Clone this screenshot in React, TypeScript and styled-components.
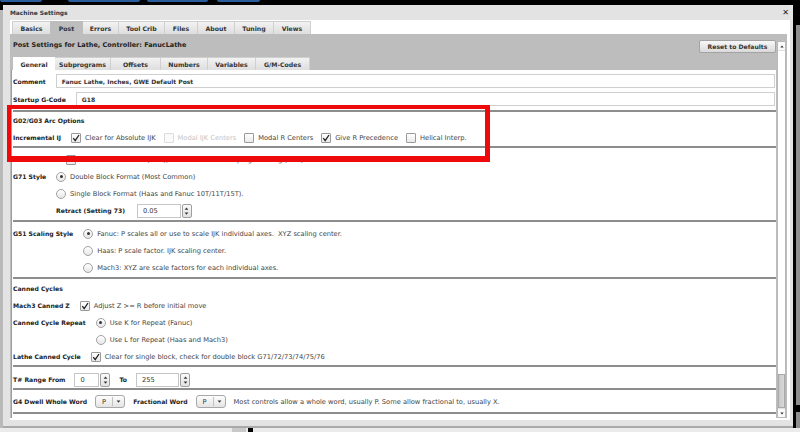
import React from 'react';
import styled, { createGlobalStyle, css } from 'styled-components';

const Global = createGlobalStyle`
  html, body { margin: 0; padding: 0; background: #e9e9e9; }
  body { font-family: "DejaVu Sans", Verdana, sans-serif; }
  * { box-sizing: border-box; }
`;

const Screen = styled.div`
  position: relative;
  width: 800px;
  height: 432px;
  overflow: hidden;
  display: flex;
  flex-direction: column;
  background: #e9e9e9;
  font-family: "DejaVu Sans", Verdana, sans-serif;
  font-size: 6.7px;
  color: #333;
`;

const TopStrip = styled.div`
  height: 5px;
  flex: none;
  background: #000;
  display: flex;
  align-items: flex-start;
`;

const BluePill = styled.div<{ $w: number; $ml: number }>`
  width: ${p => p.$w}px;
  margin-left: ${p => p.$ml}px;
  height: 2px;
  background: #2a5d9c;
  border-radius: 0 0 3px 3px;
`;

const Middle = styled.div`
  height: 423px;
  flex: none;
  display: flex;
`;

const LeftEdge = styled.div`
  width: 3px;
  background: linear-gradient(#000 0 5px, #b9b9b9 5px);
`;

const RightEdge = styled.div`
  width: 7px;
  display: flex;
`;

const RightDark = styled.div`
  width: 3px;
  background: #000;
`;

const RightGray = styled.div`
  flex: 1;
  background: linear-gradient(#000 0 20px, #8e8e8e 20px, #8e8e8e 400px, #000 400px, #000 407px, #8e8e8e 407px);
`;

const Dialog = styled.div`
  width: 790px;
  display: flex;
  flex-direction: column;
  background: #e3e3e3;
  border-radius: 5px 5px 0 0;
  padding: 0 3px 6px 7px;
  border-bottom: 2px solid #a9a9a9;
`;

const TitleBar = styled.div`
  height: 15px;
  flex: none;
  display: flex;
  align-items: center;
  justify-content: space-between;
  padding-right: 1px;
`;

const Title = styled.span`
  font-weight: bold;
  color: #1d3a4a;
  font-size: 5.9px;
`;

const Close = styled.span`
  font-weight: bold;
  font-size: 8px;
  color: #222;
`;

const Body = styled.div`
  flex: 1;
  display: flex;
  flex-direction: column;
  background: #fff;
  padding: 0 3px 2px 0;
`;

const TabRow = styled.div`
  height: 14px;
  flex: none;
  display: flex;
  align-items: flex-end;
  padding-left: 2px;
`;

const Tab = styled.div<{ $w: number; $active?: boolean; $activeBg: string }>`
  width: ${p => p.$w}px;
  height: 13px;
  display: flex;
  align-items: center;
  justify-content: center;
  font-weight: bold;
  font-size: 6.2px;
  color: #333;
  border: 1px solid #cfcfcf;
  border-bottom: none;
  margin-right: -1px;
  background: linear-gradient(#f2f2f2, #dedede);
  ${p => p.$active && css`
    background: ${p.$activeBg};
    border-color: ${p.$activeBg};
    position: relative;
    z-index: 1;
  `}
`;

const Panel = styled.div`
  flex: 1;
  display: flex;
  background: #bdbdbd;
`;

const Main = styled.div`
  flex: 1;
  display: flex;
  flex-direction: column;
  padding-left: 1px;
`;

const Header = styled.div`
  height: 22px;
  flex: none;
  display: flex;
  align-items: center;
  justify-content: space-between;
  padding-left: 2px;
  font-weight: bold;
  font-size: 6.5px;
  color: #222;
`;

const ResetButton = styled.div`
  width: 77px;
  height: 13px;
  margin-top: 3px;
  display: flex;
  align-items: center;
  justify-content: center;
  border: 1px solid #a3a3a3;
  border-radius: 2px;
  background: linear-gradient(#f7f7f7, #dadada);
  font-weight: bold;
  font-size: 6.1px;
  color: #333;
`;

const Scrollbar = styled.div`
  width: 9px;
  margin: 7px 1px 0 1px;
  display: flex;
  flex-direction: column;
  background: #fff;
  border: 1px solid #b8b8b8;
`;

const ScrollArrow = styled.div`
  height: 8px;
  display: flex;
  align-items: center;
  justify-content: center;
  background: #fafafa;
`;

const ScrollTrack = styled.div`
  flex: 1;
  display: flex;
  flex-direction: column;
  justify-content: flex-end;
  border-top: 1px solid #e0e0e0;
  border-bottom: 1px solid #e0e0e0;
`;

const ScrollThumb = styled.div`
  height: 34px;
  background: linear-gradient(to right, #c9c9c9, #d9d9d9);
  border: 1px solid #a9a9a9;
`;

const Form = styled.div`
  flex: 1;
  display: flex;
  flex-direction: column;
  background: #fff;
  border-left: 1px solid #9c9c9c;
  padding-left: 1px;
`;

const Section = styled.div<{ $pt?: number; $pb?: number; $gap?: number }>`
  display: flex;
  flex-direction: column;
  gap: ${p => p.$gap || 0}px;
  padding-top: ${p => p.$pt || 0}px;
  padding-bottom: ${p => p.$pb || 0}px;
  border-bottom: 2px solid #8d8d8d;
`;

const Line = styled.div<{ $gap?: number; $h?: number }>`
  height: ${p => p.$h || 17}px;
  display: flex;
  align-items: center;
  gap: ${p => (p.$gap === undefined ? 10 : p.$gap)}px;
  white-space: nowrap;
`;

const Group = styled.div`
  display: flex;
  align-items: flex-start;
  gap: 10px;
`;

const Stack = styled.div`
  display: flex;
  flex-direction: column;
`;

const Label = styled.span`
  height: 17px;
  display: flex;
  align-items: center;
  font-weight: bold;
  font-size: 6.1px;
  color: #222;
  white-space: nowrap;
`;

const Text = styled.span<{ $disabled?: boolean }>`
  color: ${p => (p.$disabled ? '#c4c4c4' : '#444')};
  white-space: nowrap;
`;

const TextInput = styled.div`
  flex: 1;
  height: 14px;
  margin-right: 1px;
  display: flex;
  align-items: center;
  padding-left: 5px;
  border: 1px solid #cfcfcf;
  font-weight: bold;
  font-size: 6px;
  color: #333;
`;

const Options = styled.div`
  display: flex;
  align-items: center;
  gap: 8px;
`;

const Option = styled.label`
  display: flex;
  align-items: center;
  gap: 4px;
`;

const BoxMark = styled.span<{ $disabled?: boolean }>`
  width: 10px;
  height: 10px;
  display: flex;
  align-items: center;
  justify-content: center;
  border: 1px solid ${p => (p.$disabled ? '#dcdcdc' : '#9a9a9a')};
  background: ${p => (p.$disabled ? '#fafafa' : 'linear-gradient(#ffffff, #e9e9e9)')};
  border-radius: 1px;
`;

const RadioMark = styled.span`
  width: 10px;
  height: 10px;
  display: flex;
  align-items: center;
  justify-content: center;
  border: 1px solid #a2a2a2;
  border-radius: 50%;
  background: linear-gradient(#ffffff, #e6e6e6);
`;

const RadioDot = styled.span`
  width: 3px;
  height: 3px;
  border-radius: 50%;
  background: #333;
`;

const SpinWrap = styled.div`
  display: flex;
  align-items: center;
  gap: 1px;
`;

const SpinField = styled.div<{ $w: number }>`
  width: ${p => p.$w}px;
  height: 14px;
  display: flex;
  align-items: center;
  padding-left: 5px;
  border: 1px solid #c6c6c6;
  color: #333;
`;

const SpinButton = styled.div`
  width: 10px;
  height: 14px;
  display: flex;
  flex-direction: column;
  align-items: center;
  justify-content: space-evenly;
  border: 1px solid #9f9f9f;
  border-radius: 2px;
  background: linear-gradient(#fafafa, #e2e2e2);
`;

const Select = styled.div`
  width: 30px;
  height: 13px;
  display: flex;
  align-items: center;
  border: 1px solid #a8a8a8;
  border-radius: 3px;
  background: linear-gradient(#fdfdfd, #e4e4e4);
  color: #333;
`;

const SelectValue = styled.span`
  width: 16px;
  text-align: center;
`;

const SelectArrow = styled.span`
  flex: 1;
  height: 9px;
  display: flex;
  align-items: center;
  justify-content: center;
  border-left: 1px solid #c2c2c2;
`;

const Annotation = styled.div`
  position: absolute;
  left: 7px;
  top: 105px;
  width: 483px;
  height: 57px;
  border: 4px solid #ee0a0a;
  border-bottom-width: 6px;
  border-right-width: 5px;
  pointer-events: none;
`;

const BottomStrip = styled.div`
  flex: 1;
  display: flex;
  align-items: stretch;
  background: #ebebeb;
`;

const BottomBlock = styled.div<{ $w: number; $ml: number; $c: string }>`
  width: ${p => p.$w}px;
  margin-left: ${p => p.$ml}px;
  background: ${p => p.$c};
`;

const Tri = ({ down, size = 5 }: { down?: boolean; size?: number }) => (
  <svg width={size} height={Math.ceil(size * 0.6)} viewBox="0 0 6 4">
    {down ? <path d="M0.5 0.5 H5.5 L3 3.5 Z" fill="#333" /> : <path d="M0.5 3.5 H5.5 L3 0.5 Z" fill="#333" />}
  </svg>
);

const CheckMark = () => (
  <svg width="8" height="8" viewBox="0 0 8 8">
    <path d="M1.3 4.2 L3.2 6.6 L7 1" fill="none" stroke="#222" strokeWidth="1.3" />
  </svg>
);

const Checkbox = ({ checked, disabled, children }: { checked?: boolean; disabled?: boolean; children: React.ReactNode }) => (
  <Option>
    <BoxMark $disabled={disabled}>{checked && <CheckMark />}</BoxMark>
    <Text $disabled={disabled}>{children}</Text>
  </Option>
);

const Radio = ({ checked, children }: { checked?: boolean; children: React.ReactNode }) => (
  <Option>
    <RadioMark>{checked && <RadioDot />}</RadioMark>
    <Text>{children}</Text>
  </Option>
);

const Spin = ({ w, value }: { w: number; value: string }) => (
  <SpinWrap>
    <SpinField $w={w}>{value}</SpinField>
    <SpinButton>
      <Tri size={5} />
      <Tri down size={5} />
    </SpinButton>
  </SpinWrap>
);

const Dropdown = ({ value }: { value: string }) => (
  <Select>
    <SelectValue>{value}</SelectValue>
    <SelectArrow>
      <Tri down size={5} />
    </SelectArrow>
  </Select>
);

const mainTabs: [string, number][] = [
  ['Basics', 39], ['Post', 33], ['Errors', 37], ['Tool Crib', 47], ['Files', 34], ['About', 38], ['Tuning', 40], ['Views', 38],
];
const subTabs: [string, number][] = [
  ['General', 42], ['Subprograms', 57], ['Offsets', 51], ['Numbers', 48], ['Variables', 49], ['G/M-Codes', 55],
];

export default function App() {
  return (
    <>
      <Global />
      <Screen>
        <TopStrip>
          <BluePill $w={42} $ml={0} />
          <BluePill $w={72} $ml={26} />
          <BluePill $w={61} $ml={7} />
          <BluePill $w={43} $ml={9} />
        </TopStrip>
        <Middle>
          <LeftEdge />
          <Dialog>
            <TitleBar>
              <Title>Machine Settings</Title>
              <Close>✕</Close>
            </TitleBar>
            <Body>
              <TabRow>
                {mainTabs.map(([t, w]) => (
                  <Tab key={t} $w={w} $active={t === 'Post'} $activeBg="#bdbdbd">{t}</Tab>
                ))}
              </TabRow>
              <Panel>
                <Main>
                  <Header>
                    <span>Post Settings for Lathe, Controller: FanucLathe</span>
                    <ResetButton>Reset to Defaults</ResetButton>
                  </Header>
                  <TabRow>
                    {subTabs.map(([t, w]) => (
                      <Tab key={t} $w={w} $active={t === 'General'} $activeBg="#ffffff">{t}</Tab>
                    ))}
                  </TabRow>
                  <Form>
                    <Section $pt={4} $pb={4} $gap={4}>
                      <Line $h={14}>
                        <Label>Comment</Label>
                        <TextInput>Fanuc Lathe, Inches, GWE Default Post</TextInput>
                      </Line>
                      <Line $h={14}>
                        <Label>Startup G-Code</Label>
                        <TextInput>G18</TextInput>
                      </Line>
                    </Section>

                    <Section>
                      <Line>
                        <Label>G02/G03 Arc Options</Label>
                      </Line>
                      <Line>
                        <Label>Incremental IJ</Label>
                        <Options>
                          <Checkbox checked>Clear for Absolute IJK</Checkbox>
                          <Checkbox disabled>Modal IJK Centers</Checkbox>
                          <Checkbox>Modal R Centers</Checkbox>
                          <Checkbox checked>Give R Precedence</Checkbox>
                          <Checkbox>Helical Interp.</Checkbox>
                        </Options>
                      </Line>
                    </Section>

                    <Section $pt={3} $pb={1}>
                      <Line>
                        <Label>Lathe X Axis</Label>
                        <Checkbox>Check for Diameter (G07), Uncheck for Radius programming (G08). Leave as radius for mills.</Checkbox>
                      </Line>
                      <Group>
                        <Label>G71 Style</Label>
                        <Stack>
                          <Line>
                            <Radio checked>Double Block Format (Most Common)</Radio>
                          </Line>
                          <Line>
                            <Radio>Single Block Format (Haas and Fanuc 10T/11T/15T).</Radio>
                          </Line>
                          <Line $gap={12}>
                            <Label>Retract (Setting 73)</Label>
                            <Spin w={44} value="0.05" />
                          </Line>
                        </Stack>
                      </Group>
                    </Section>

                    <Section $pt={3} $pb={1}>
                      <Group>
                        <Label>G51 Scaling Style</Label>
                        <Stack>
                          <Line>
                            <Radio checked>Fanuc: P scales all or use to scale IJK individual axes.&nbsp; XYZ scaling center.</Radio>
                          </Line>
                          <Line>
                            <Radio>Haas: P scale factor. IJK scaling center.</Radio>
                          </Line>
                          <Line>
                            <Radio>Mach3: XYZ are scale factors for each individual axes.</Radio>
                          </Line>
                        </Stack>
                      </Group>
                    </Section>

                    <Section $pt={1}>
                      <Line>
                        <Label>Canned Cycles</Label>
                      </Line>
                      <Line>
                        <Label>Mach3 Canned Z</Label>
                        <Checkbox checked>Adjust Z &gt;= R before initial move</Checkbox>
                      </Line>
                      <Group>
                        <Label>Canned Cycle Repeat</Label>
                        <Stack>
                          <Line>
                            <Radio checked>Use K for Repeat (Fanuc)</Radio>
                          </Line>
                          <Line>
                            <Radio>Use L for Repeat (Haas and Mach3)</Radio>
                          </Line>
                        </Stack>
                      </Group>
                      <Line>
                        <Label>Lathe Canned Cycle</Label>
                        <Checkbox checked>Clear for single block, check for double block G71/72/73/74/75/76</Checkbox>
                      </Line>
                    </Section>

                    <Section $pt={4}>
                      <Line $gap={9}>
                        <Label>T# Range From</Label>
                        <Spin w={25} value="0" />
                        <Label>To</Label>
                        <Spin w={43} value="255" />
                      </Line>
                    </Section>

                    <Section $pt={3} $pb={2}>
                      <Line $gap={8}>
                        <Label>G4 Dwell Whole Word</Label>
                        <Dropdown value="P" />
                        <Label>Fractional Word</Label>
                        <Dropdown value="P" />
                        <Text>Most controls allow a whole word, usually P. Some allow fractional to, usually X.</Text>
                      </Line>
                    </Section>
                  </Form>
                </Main>
                <Scrollbar>
                  <ScrollArrow><Tri size={4} /></ScrollArrow>
                  <ScrollTrack>
                    <ScrollThumb />
                  </ScrollTrack>
                  <ScrollArrow><Tri down size={4} /></ScrollArrow>
                </Scrollbar>
              </Panel>
            </Body>
          </Dialog>
          <RightEdge>
            <RightDark />
            <RightGray />
          </RightEdge>
        </Middle>
        <BottomStrip>
          <BottomBlock $w={14} $ml={232} $c="#c9c9c9" />
          <BottomBlock $w={5} $ml={2} $c="#000" />
        </BottomStrip>
        <Annotation />
      </Screen>
    </>
  );
}
